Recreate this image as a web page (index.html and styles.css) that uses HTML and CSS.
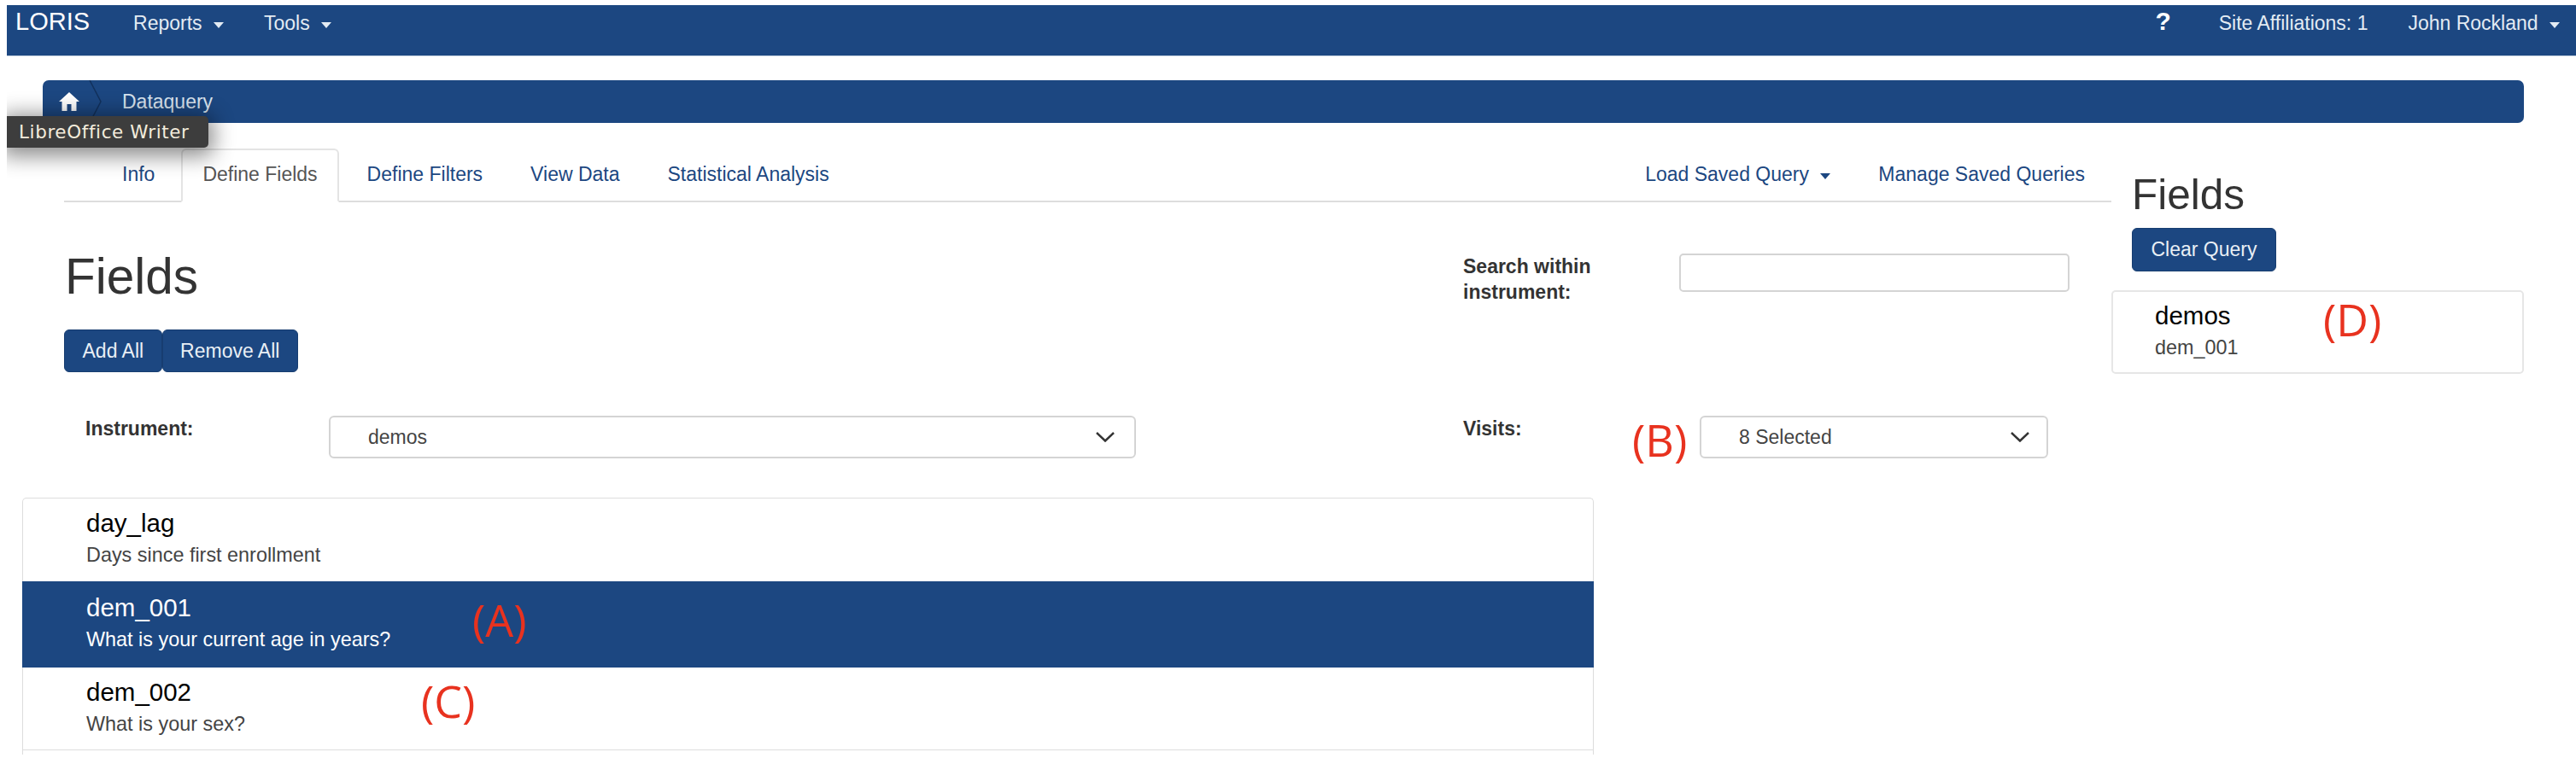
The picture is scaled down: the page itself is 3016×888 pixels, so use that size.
FILE: index.html
```html
<!DOCTYPE html>
<html lang="en">
<head>
  <meta charset="UTF-8" />
  <title>LORIS - Dataquery</title>
  <link rel="stylesheet" href="styles.css">
</head>
<body>

  <div class="page">
    <nav class="navbar">
      <a class="brand">LORIS</a>
      <a class="nav-link">Reports <span class="caret"></span></a>
      <a class="nav-link">Tools <span class="caret"></span></a>
      <span class="nav-spacer"></span>
      <a class="nav-help">?</a>
      <a class="nav-link">Site Affiliations: 1</a>
      <a class="nav-link">John Rockland <span class="caret"></span></a>
    </nav>

    <div class="breadcrumb">
      <svg class="home-icon" viewBox="0 0 24 22">
        <path d="M12 0 L24 11 L20.5 11 L20.5 22 L14.5 22 L14.5 14 L9.5 14 L9.5 22 L3.5 22 L3.5 11 L0 11 Z" fill="#fff" />
      </svg>
      <svg class="crumb-sep" viewBox="0 0 16 50">
        <polyline points="1,0 14,25 1,50" fill="none" stroke="#12315c" stroke-width="1.5" />
      </svg>
      <span class="crumb">Dataquery</span>
    </div>

    <div class="tooltip">LibreOffice Writer</div>

    <div class="content">
      <div class="main">
        <div class="tabs">
          <a class="tab">Info</a>
          <a class="tab active">Define Fields</a>
          <a class="tab">Define Filters</a>
          <a class="tab">View Data</a>
          <a class="tab">Statistical Analysis</a>
          <span class="tabs-spacer"></span>
          <a class="tab">Load Saved Query <span class="caret"></span></a>
          <a class="tab">Manage Saved Queries</a>
        </div>

        <div class="fields-panel">
          <div class="fields-head">
            <h1>Fields</h1>
            <div class="btn-group">
              <button class="btn">Add All</button>
              <button class="btn">Remove All</button>
            </div>
          </div>

          <div class="search-row">
            <label class="form-label search-label">Search within instrument:</label>
            <input class="search-input" type="text" />
          </div>

          <div class="select-row">
            <label class="form-label instrument-label">Instrument:</label>
            <div class="select instrument-select">
              <span>demos</span>
              <svg class="chevron" viewBox="0 0 22 12"><polyline points="1,1 11,10.5 21,1" /></svg>
            </div>
          </div>

          <div class="select-row">
            <label class="form-label visits-label">Visits:</label>
            <div class="select visits-select">
              <span>8 Selected</span>
              <svg class="chevron" viewBox="0 0 22 12"><polyline points="1,1 11,10.5 21,1" /></svg>
            </div>
            <span class="mark mark-b">(B)</span>
          </div>
        </div>

        <div class="field-list">
          <div class="field-row">
            <div class="field-name">day_lag</div>
            <div class="field-desc">Days since first enrollment</div>
          </div>
          <div class="field-row selected">
            <div class="field-name">dem_001</div>
            <div class="field-desc">What is your current age in years?</div>
            <span class="mark mark-a">(A)</span>
          </div>
          <div class="field-row last">
            <div class="field-name">dem_002</div>
            <div class="field-desc">What is your sex?</div>
            <span class="mark mark-c">(C)</span>
          </div>
          <div class="field-stub"></div>
        </div>
      </div>

      <aside class="sidebar">
        <h2>Fields</h2>
        <button class="btn clear-btn">Clear Query</button>
        <div class="selected-card">
          <div class="card-name">demos</div>
          <div class="card-item">dem_001</div>
          <span class="mark mark-d">(D)</span>
        </div>
      </aside>
    </div>
  </div>

</body>
</html>
```

FILE: styles.css
```css
html, body {
  margin: 0;
  background: #fff;
}
body {
  font-family: "Liberation Sans", Arial, sans-serif;
  font-size: 23px;
  color: #333;
  height: 888px;
  overflow: hidden;
}
.page {
  position: relative;
  margin: 6px 0 0 8px;
  height: 882px;
  overflow: hidden;
}

/* top bar */
.navbar {
  display: flex;
  height: 59px;
  background: #1c4781;
  border-bottom: 1px solid #c5d2e0;
  color: #e3ebf3;
  box-sizing: content-box;
}
.brand {
  font-size: 29px;
  line-height: 38px;
  margin-left: 10px;
  margin-right: 51px;
  color: #fff;
}
.nav-link {
  line-height: 42px;
  margin-right: 47px;
  white-space: nowrap;
}
.nav-link:last-child {
  margin-right: 19px;
}
.nav-spacer {
  flex: 1;
}
.nav-help {
  font-size: 30px;
  font-weight: bold;
  line-height: 38px;
  color: #fff;
  margin-right: 56px;
}
.caret {
  display: inline-block;
  width: 0;
  height: 0;
  margin-left: 7px;
  vertical-align: 2px;
  border-top: 7px solid currentColor;
  border-left: 6.5px solid transparent;
  border-right: 6.5px solid transparent;
}

/* breadcrumb */
.breadcrumb {
  display: flex;
  align-items: center;
  height: 50px;
  margin: 28px 61px 0 42px;
  padding-left: 19px;
  background: #1c4781;
  border-radius: 7px;
  color: #d8e3ee;
  box-sizing: border-box;
}
.home-icon {
  width: 24px;
  height: 22px;
}
.crumb-sep {
  width: 16px;
  height: 50px;
  margin-left: 11px;
}
.crumb {
  margin-left: 23px;
}

.tooltip {
  position: absolute;
  left: 0;
  top: 130px;
  width: 236px;
  height: 37px;
  box-sizing: border-box;
  padding-left: 14px;
  background: #3d3d3d;
  border-radius: 0 5px 5px 0;
  box-shadow: 0 4px 24px 6px rgba(0, 0, 0, 0.45);
  color: #f3ecdc;
  font-family: "DejaVu Sans", sans-serif;
  font-size: 21.5px;
  letter-spacing: 0.6px;
  line-height: 37px;
  white-space: nowrap;
}

/* page body */
.content {
  display: flex;
  margin-top: 30px;
}
.main {
  flex: none;
  width: 2464px;
}
.tabs {
  display: flex;
  height: 63px;
  margin-left: 67px;
  padding: 0 3px 0 40px;
  box-sizing: border-box;
  border-bottom: 2px solid #ddd;
  color: #1c4781;
}
.tab {
  padding: 17px 25px 0;
  margin: 0 3px -2px;
  white-space: nowrap;
}
.tab.active {
  background: #fff;
  color: #555;
  border: 2px solid #e4e4e4;
  border-bottom-color: #fff;
  border-radius: 6px 6px 0 0;
  padding: 15px 23px 0;
  margin-right: 5px;
}
.tabs-spacer {
  flex: 1;
}

.fields-panel {
  display: grid;
  grid-template-columns: 1638px 1fr;
  row-gap: 51px;
  margin-left: 67px;
}
h1 {
  font-size: 58.5px;
  font-weight: normal;
  line-height: 62px;
  margin: 56px 0 31px 1px;
}
.btn-group {
  display: flex;
}
.btn {
  height: 50px;
  padding: 0 20.5px;
  font: inherit;
  color: #e9eff5;
  background: #1c4781;
  border: 1px solid #173d70;
  border-radius: 6px;
}
.form-label {
  font-weight: bold;
  line-height: 30px;
  flex: none;
}
.search-row {
  display: flex;
  align-items: flex-start;
  margin-top: 60px;
}
.search-label {
  width: 253px;
}
.search-input {
  width: 457px;
  height: 45px;
  box-sizing: border-box;
  border: 2px solid #d4d4d4;
  border-radius: 5px;
}
.select-row {
  position: relative;
  display: flex;
  align-items: flex-start;
}
.instrument-label {
  width: 285px;
  margin-left: 25px;
}
.visits-label {
  width: 277px;
}
.select {
  display: flex;
  align-items: center;
  justify-content: space-between;
  box-sizing: border-box;
  height: 50px;
  border: 2px solid #d4d4d4;
  border-radius: 6px;
  color: #444;
}
.instrument-select {
  width: 945px;
  padding: 0 23px 0 44px;
}
.visits-select {
  width: 408px;
  padding: 0 20px 0 44px;
}
.chevron {
  width: 22px;
  height: 12px;
}
.chevron polyline {
  fill: none;
  stroke: #333;
  stroke-width: 2.5;
}

/* red labels drawn over the screenshot */
.mark {
  position: absolute;
  color: #e8321f;
  font-family: "Open Sans", sans-serif;
  font-size: 52px;
  font-weight: 500;
  line-height: 50px;
}
.mark-a {
  left: 527px;
  top: 20px;
}
.mark-b {
  left: 198px;
  top: 3px;
}
.mark-c {
  left: 466px;
  top: 14px;
}
.mark-d {
  left: 246px;
  top: 7px;
}

.field-list {
  width: 1840px;
  margin: 46px 0 0 18px;
  box-sizing: border-box;
  border: 1px solid #ddd;
  border-bottom: none;
  border-radius: 5px 5px 0 0;
}
.field-row {
  position: relative;
  padding: 13px 0 16px 74px;
  color: #444;
}
.field-name {
  font-size: 29.5px;
  line-height: 32px;
  color: #000;
}
.field-desc {
  line-height: 30px;
  margin-top: 6px;
  font-size: 23.4px;
}
.field-row.selected {
  padding: 15px 0 18px 75px;
  margin: 0 -1px;
  background: #1c4781;
  color: #fff;
}
.field-row.selected .field-name {
  color: #fff;
}
.field-row.last {
  padding-bottom: 15px;
  border-bottom: 1px solid #ddd;
}
.field-stub {
  height: 5px;
}

/* right column */
.sidebar {
  flex: none;
  width: 483px;
}
h2 {
  font-size: 49.5px;
  font-weight: normal;
  line-height: 50px;
  margin: 29px 0 14px 24px;
}
.clear-btn {
  display: block;
  height: 51px;
  width: 169px;
  padding: 0;
  margin-left: 24px;
}
.selected-card {
  position: relative;
  box-sizing: border-box;
  height: 98px;
  margin-top: 22px;
  padding: 13px 0 0 49px;
  border: 2px solid #e6e6e6;
  border-radius: 5px;
}
.card-name {
  font-size: 29.5px;
  line-height: 30px;
  color: #000;
}
.card-item {
  font-size: 23.4px;
  line-height: 30px;
  margin-top: 7px;
  color: #444;
}
```
